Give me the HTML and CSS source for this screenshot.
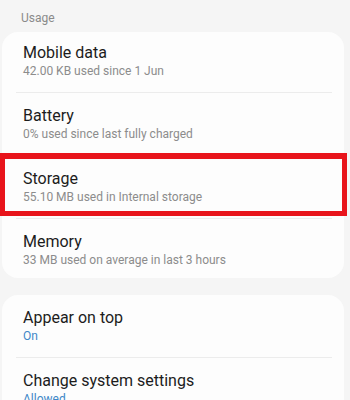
FILE: index.html
```html
<!DOCTYPE html>
<html>
<head>
<meta charset="utf-8">
<link rel="stylesheet" href="styles.css">
</head>
<body>
<div class="screen">
  <div class="section-label">Usage</div>
  <div class="card">
    <div class="row first">
      <div class="title">Mobile data</div>
      <div class="sub">42.00 KB used since 1 Jun</div>
    </div>
    <div class="divider"></div>
    <div class="row">
      <div class="title">Battery</div>
      <div class="sub">0% used since last fully charged</div>
    </div>
    <div class="divider"></div>
    <div class="row highlighted">
      <div class="title">Storage</div>
      <div class="sub">55.10 MB used in Internal storage</div>
      <span class="highlight"></span>
    </div>
    <div class="divider"></div>
    <div class="row last">
      <div class="title">Memory</div>
      <div class="sub">33 MB used on average in last 3 hours</div>
    </div>
  </div>
  <div class="card second">
    <div class="row">
      <div class="title">Appear on top</div>
      <div class="sub blue">On</div>
    </div>
    <div class="divider"></div>
    <div class="row">
      <div class="title">Change system settings</div>
      <div class="sub blue">Allowed</div>
    </div>
  </div>
</div>
</body>
</html>
```

FILE: styles.css
```css
html, body {
  margin: 0;
  padding: 0;
  background: #f5f5f5;
  font-family: Roboto, "Liberation Sans", sans-serif;
}

.screen {
  width: 350px;
  height: 400px;
  overflow: hidden;
  display: flex;
  flex-direction: column;
}

.section-label {
  padding: 10px 0 0 21px;
  font-size: 12px;
  line-height: 16px;
  color: #8a8a8a;
}

.card {
  margin: 6px 6px 0 2px;
  background: #fdfdfd;
  border-radius: 16px;
}

.card.second {
  margin-top: 17px;
}

.row {
  position: relative;
  padding: 13px 0 13px 21px;
}

.row.first {
  padding-top: 11px;
}

.row.last {
  padding-bottom: 10px;
}

.title {
  font-size: 16px;
  line-height: 20px;
  color: #1c1c1c;
}

.sub {
  font-size: 12px;
  line-height: 16px;
  color: #8c8c8c;
}

.sub.blue {
  color: #3f88c8;
}

.divider {
  height: 1px;
  background: #ececec;
  margin: 0 12px 0 14px;
}

.highlight {
  position: absolute;
  left: -2px;
  right: -3px;
  top: -3px;
  bottom: 2px;
  border: 5px solid #e8141b;
  border-top-width: 6px;
  pointer-events: none;
}
```
